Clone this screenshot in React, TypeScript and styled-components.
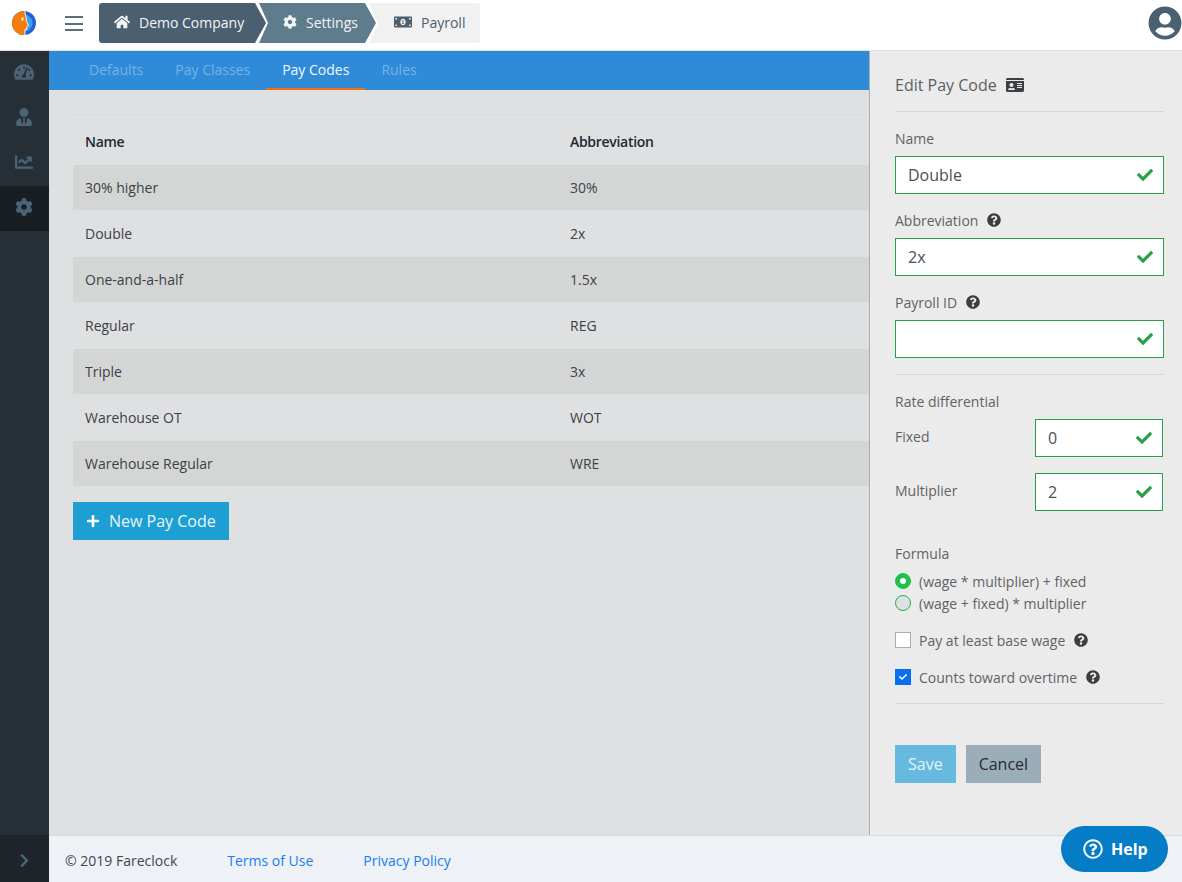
import React from 'react';
import styled, { createGlobalStyle } from 'styled-components';
import {
  FaChartLine, FaCheck, FaChevronRight, FaCog, FaHome, FaIdCard, FaMoneyBillAlt,
  FaPlus, FaQuestionCircle, FaRegQuestionCircle, FaTachometerAlt, FaUserCircle, FaUserTie,
} from 'react-icons/fa';

const Global = createGlobalStyle`
  * { box-sizing: border-box; }
  html, body { margin: 0; height: 100%; }
  body { font-family: "Open Sans", "Liberation Sans", sans-serif; color: #333; overflow: hidden; }
`;

const rows = [
  ['30% higher', '30%'],
  ['Double', '2x'],
  ['One-and-a-half', '1.5x'],
  ['Regular', 'REG'],
  ['Triple', '3x'],
  ['Warehouse OT', 'WOT'],
  ['Warehouse Regular', 'WRE'],
];

const Page = styled.div`
  position: relative;
  width: 1182px;
  height: 882px;
  display: flex;
  flex-direction: column;
  overflow: hidden;
`;

const Header = styled.header`
  height: 51px;
  flex: none;
  display: flex;
  align-items: flex-start;
  background: #fff;
  border-bottom: 1px solid #dde3e8;
`;

const Logo = styled.svg`
  width: 24px;
  height: 24px;
  margin: 11px 0 0 12px;
`;

const Burger = styled.div`
  margin: 16px 0 0 29px;
  width: 18px;
  height: 15px;
  display: flex;
  flex-direction: column;
  justify-content: space-between;
  & > i { display: block; height: 2px; background: #5b6e7b; }
`;

const Crumbs = styled.nav`
  margin: 3px 0 0 16px;
  height: 40px;
  display: flex;
`;

const Crumb = styled.div<{ $kind: 'first' | 'mid' | 'last' }>`
  height: 40px;
  display: flex;
  align-items: center;
  gap: 9px;
  font-size: 14px;
  padding-bottom: 2px;
  color: ${p => (p.$kind === 'last' ? '#4c5f6c' : '#f2f5f6')};
  background: ${p => (p.$kind === 'first' ? '#4a6070' : p.$kind === 'mid' ? '#5f7c8c' : '#f1f1f2')};
  width: ${p => (p.$kind === 'first' ? '167px' : p.$kind === 'mid' ? '117px' : '111px')};
  padding-left: ${p => (p.$kind === 'first' ? '15px' : p.$kind === 'mid' ? '24px' : '25px')};
  margin-left: ${p => (p.$kind === 'first' ? '0' : '-7px')};
  border-radius: ${p => (p.$kind === 'first' ? '3px 0 0 3px' : p.$kind === 'last' ? '0 3px 3px 0' : '0')};
  clip-path: ${p =>
    p.$kind === 'first'
      ? 'polygon(0 0, calc(100% - 11px) 0, 100% 50%, calc(100% - 11px) 100%, 0 100%)'
      : p.$kind === 'mid'
      ? 'polygon(0 0, calc(100% - 11px) 0, 100% 50%, calc(100% - 11px) 100%, 0 100%, 9px 50%)'
      : 'polygon(0 0, 100% 0, 100% 100%, 0 100%, 9px 50%)'};
  & > svg {
    flex: none;
    font-size: ${p => (p.$kind === 'first' ? '16px' : p.$kind === 'mid' ? '14px' : '18px')};
  }
`;

const Avatar = styled(FaUserCircle)`
  margin: 6px 0 0 auto;
  width: 34px;
  height: 34px;
  color: #4a6172;
`;

const Body = styled.div`
  flex: 1;
  display: flex;
  min-height: 0;
`;

const Side = styled.aside`
  width: 49px;
  flex: none;
  background: #262e36;
  display: flex;
  flex-direction: column;
`;

const SideItem = styled.div<{ $active?: boolean; $size?: number }>`
  height: 45px;
  flex: none;
  display: flex;
  align-items: center;
  justify-content: center;
  padding: 0 1px 3px 0;
  background: ${p => (p.$active ? '#191e22' : 'transparent')};
  color: #4b6475;
  font-size: ${p => p.$size || 18}px;
`;

const SideFoot = styled.div`
  margin-top: auto;
  height: 47px;
  padding-top: 3px;
  background: #1e2429;
  display: flex;
  align-items: center;
  justify-content: center;
  color: #4b6475;
  font-size: 15px;
`;

const Column = styled.div`
  flex: 1;
  min-width: 0;
  display: flex;
  flex-direction: column;
`;

const Work = styled.div`
  flex: 1;
  min-height: 0;
  display: flex;
`;

const Main = styled.main`
  flex: 1;
  min-width: 0;
  background: #dfe0e2;
  display: flex;
  flex-direction: column;
`;

const Tabs = styled.div`
  height: 39px;
  flex: none;
  background: #2f8bd8;
  display: flex;
  padding-left: 24px;
`;

const Tab = styled.div<{ $active?: boolean }>`
  height: 39px;
  padding: 0 16px;
  font-size: 14px;
  line-height: 38px;
  color: ${p => (p.$active ? '#f1f7fc' : '#74b2e8')};
  border-bottom: 2px solid ${p => (p.$active ? '#f26f0f' : 'transparent')};
`;

const Content = styled.div`
  padding: 27px 0 0 24px;
`;

const Table = styled.div`
  border-top: 1px solid #e3e5e7;
  display: flex;
  flex-direction: column;
`;

const Row = styled.div<{ $striped?: boolean; $head?: boolean }>`
  height: 46px;
  display: grid;
  grid-template-columns: 485px 1fr;
  align-items: center;
  padding-left: 12px;
  font-size: 14px;
  font-weight: ${p => (p.$head ? 600 : 400)};
  letter-spacing: ${p => (p.$head ? '-0.3px' : '0')};
  color: ${p => (p.$head ? '#23282c' : '#3c4146')};
  background: ${p => (p.$striped ? '#d4d6d5' : 'transparent')};
  border-top: ${p => (p.$head ? '0' : '1px solid #dde0e3')};
`;

const NewButton = styled.button`
  margin-top: 16px;
  height: 38px;
  width: 156px;
  border: 0;
  padding: 0 0 0 13px;
  display: flex;
  align-items: center;
  gap: 9px;
  background: #1d9fd3;
  color: #e8f6fc;
  font: 400 16px "Open Sans", sans-serif;
  & > svg { font-size: 14px; color: #fff; }
`;

const Panel = styled.aside`
  width: 313px;
  flex: none;
  background: #ebebeb;
  border-left: 1px solid #a9adb0;
  padding: 0 18px 0 25px;
  display: flex;
  flex-direction: column;
`;

const PanelTitle = styled.div`
  height: 61px;
  padding-top: 7px;
  display: flex;
  align-items: center;
  gap: 9px;
  font-size: 16px;
  color: #5b5f62;
  border-bottom: 1px solid #d5d6d7;
  & > svg { font-size: 18px; color: #3c4043; }
`;

const Label = styled.div`
  height: 20px;
  display: flex;
  align-items: center;
  gap: 9px;
  font-size: 14px;
  color: #5f6366;
  & > svg { font-size: 14px; color: #3d3d3d; }
`;

const Field = styled.div`
  margin-top: 16px;
  display: flex;
  flex-direction: column;
  gap: 8px;
`;

const InputBox = styled.div<{ $small?: boolean }>`
  height: 38px;
  width: ${p => (p.$small ? '128px' : '269px')};
  background: #fff;
  border: 1px solid #28a046;
  padding: 0 10px 0 12px;
  display: flex;
  align-items: center;
  justify-content: space-between;
  font-size: 16px;
  color: #495057;
  & > svg { font-size: 16px; color: #28a046; }
`;

const Divider = styled.div<{ $top: number }>`
  margin-top: ${p => p.$top}px;
  height: 1px;
  background: #d5d6d7;
`;

const RateRow = styled.div<{ $top: number }>`
  width: 268px;
  display: flex;
  align-items: center;
  justify-content: space-between;
  margin-top: ${p => p.$top}px;
  font-size: 14px;
  color: #5f6366;
`;

const RateLabel = styled.span`
  margin-bottom: 4px;
`;

const Section = styled(Label)`
  margin-top: 16px;
`;

const FormulaHead = styled(Label)`
  margin-top: 32px;
`;

const Radios = styled.div`
  margin-top: 8px;
  display: flex;
  flex-direction: column;
  gap: 2px;
`;

const RadioRow = styled.div`
  height: 20px;
  display: flex;
  align-items: center;
  gap: 8px;
  font-size: 14px;
  color: #5f6366;
`;

const Radio = styled.span<{ $on?: boolean }>`
  width: 16px;
  height: 16px;
  border-radius: 50%;
  border: 1px solid ${p => (p.$on ? '#1fc14a' : '#28b04a')};
  background: ${p => (p.$on ? '#1fc14a' : '#dee2e6')};
  display: flex;
  align-items: center;
  justify-content: center;
  &::after {
    content: '';
    display: ${p => (p.$on ? 'block' : 'none')};
    width: 6px;
    height: 6px;
    border-radius: 50%;
    background: #fff;
  }
`;

const CheckRow = styled.div<{ $top: number }>`
  margin-top: ${p => p.$top}px;
  height: 20px;
  display: flex;
  align-items: center;
  gap: 8px;
  font-size: 14px;
  color: #5f6366;
  & > svg { font-size: 14px; color: #3d3d3d; margin-left: 1px; }
`;

const Box = styled.span<{ $on?: boolean }>`
  width: 16px;
  height: 16px;
  flex: none;
  border: 1px solid ${p => (p.$on ? '#0a6ef0' : '#a8aeb4')};
  background: ${p => (p.$on ? '#0a6ef0' : '#fff')};
  display: flex;
  align-items: center;
  justify-content: center;
  color: #fff;
  font-size: 8px;
`;

const Buttons = styled.div`
  margin-top: 41px;
  display: flex;
  gap: 10px;
`;

const ActionButton = styled.button<{ $save?: boolean }>`
  height: 38px;
  padding: 0 13px;
  border: 0;
  font: 400 16px "Open Sans", sans-serif;
  background: ${p => (p.$save ? '#68b9df' : '#9badb8')};
  color: ${p => (p.$save ? '#e3f3fa' : '#262c31')};
`;

const Footer = styled.footer`
  height: 47px;
  flex: none;
  background: #eef1f5;
  border-top: 1px solid #d8dbdf;
  display: flex;
  align-items: center;
  padding: 2px 0 0 16px;
  font-size: 14px;
  color: #41464b;
`;

const FooterLink = styled.a<{ $gap: number }>`
  margin-left: ${p => p.$gap}px;
  color: #1a7ef0;
  text-decoration: none;
`;

const Help = styled.div`
  position: absolute;
  left: 1061px;
  top: 826px;
  width: 107px;
  height: 46px;
  border-radius: 23px;
  background: #047cc6;
  color: #fff;
  font-size: 16px;
  font-weight: 700;
  display: flex;
  align-items: center;
  padding-left: 22px;
  gap: 8px;
  & > svg { font-size: 20px; }
`;

const Check = () => <FaCheck />;

export default function App() {
  return (
    <Page>
      <Global />
      <Header>
        <Logo viewBox="0 0 24 24">
          <circle cx="12" cy="12" r="12" fill="#1f63d8" />
          <circle cx="12" cy="12" r="8.6" fill="#3f9fe8" />
          <path d="M12 0A12 12 0 0 0 12 24L13 24L13 18.5L14.5 18.5L15 15.5L16.5 14.5L14.5 10.5L14 6L12.5 0Z" fill="#f57c0c" />
          <path d="M12.7 0L14 6L14.5 10.5L16.5 14.5L15 15.5L14.5 18.5L13 18.5L13 24" fill="none" stroke="#fff" strokeWidth="0.9" />
          <path d="M9.5 6.5H11.5V9.5H9.5Z" fill="#fff" />
        </Logo>
        <Burger><i /><i /><i /></Burger>
        <Crumbs>
          <Crumb $kind="first"><FaHome />Demo Company</Crumb>
          <Crumb $kind="mid"><FaCog />Settings</Crumb>
          <Crumb $kind="last"><FaMoneyBillAlt />Payroll</Crumb>
        </Crumbs>
        <Avatar />
      </Header>
      <Body>
        <Side>
          <SideItem $size={20}><FaTachometerAlt /></SideItem>
          <SideItem><FaUserTie /></SideItem>
          <SideItem><FaChartLine /></SideItem>
          <SideItem $active><FaCog /></SideItem>
          <SideFoot><FaChevronRight /></SideFoot>
        </Side>
        <Column>
          <Work>
            <Main>
              <Tabs>
                <Tab>Defaults</Tab>
                <Tab>Pay Classes</Tab>
                <Tab $active>Pay Codes</Tab>
                <Tab>Rules</Tab>
              </Tabs>
              <Content>
                <Table>
                  <Row $head><span>Name</span><span>Abbreviation</span></Row>
                  {rows.map((r, i) => (
                    <Row key={r[0]} $striped={i % 2 === 0}><span>{r[0]}</span><span>{r[1]}</span></Row>
                  ))}
                </Table>
                <NewButton><FaPlus />New Pay Code</NewButton>
              </Content>
            </Main>
            <Panel>
              <PanelTitle>Edit Pay Code <FaIdCard /></PanelTitle>
              <Field>
                <Label>Name</Label>
                <InputBox>Double<Check /></InputBox>
              </Field>
              <Field>
                <Label>Abbreviation <FaQuestionCircle /></Label>
                <InputBox>2x<Check /></InputBox>
              </Field>
              <Field>
                <Label>Payroll ID <FaQuestionCircle /></Label>
                <InputBox><span /><Check /></InputBox>
              </Field>
              <Divider $top={16} />
              <Section>Rate differential</Section>
              <RateRow $top={8}><RateLabel>Fixed</RateLabel><InputBox $small>0<Check /></InputBox></RateRow>
              <RateRow $top={16}><RateLabel>Multiplier</RateLabel><InputBox $small>2<Check /></InputBox></RateRow>
              <FormulaHead>Formula</FormulaHead>
              <Radios>
                <RadioRow><Radio $on />(wage * multiplier) + fixed</RadioRow>
                <RadioRow><Radio />(wage + fixed) * multiplier</RadioRow>
              </Radios>
              <CheckRow $top={17}><Box />Pay at least base wage <FaQuestionCircle /></CheckRow>
              <CheckRow $top={17}><Box $on><FaCheck /></Box>Counts toward overtime <FaQuestionCircle /></CheckRow>
              <Divider $top={16} />
              <Buttons>
                <ActionButton $save>Save</ActionButton>
                <ActionButton>Cancel</ActionButton>
              </Buttons>
            </Panel>
          </Work>
          <Footer>
            © 2019 Fareclock
            <FooterLink $gap={50} href="#">Terms of Use</FooterLink>
            <FooterLink $gap={50} href="#">Privacy Policy</FooterLink>
          </Footer>
        </Column>
      </Body>
      <Help><FaRegQuestionCircle />Help</Help>
    </Page>
  );
}
